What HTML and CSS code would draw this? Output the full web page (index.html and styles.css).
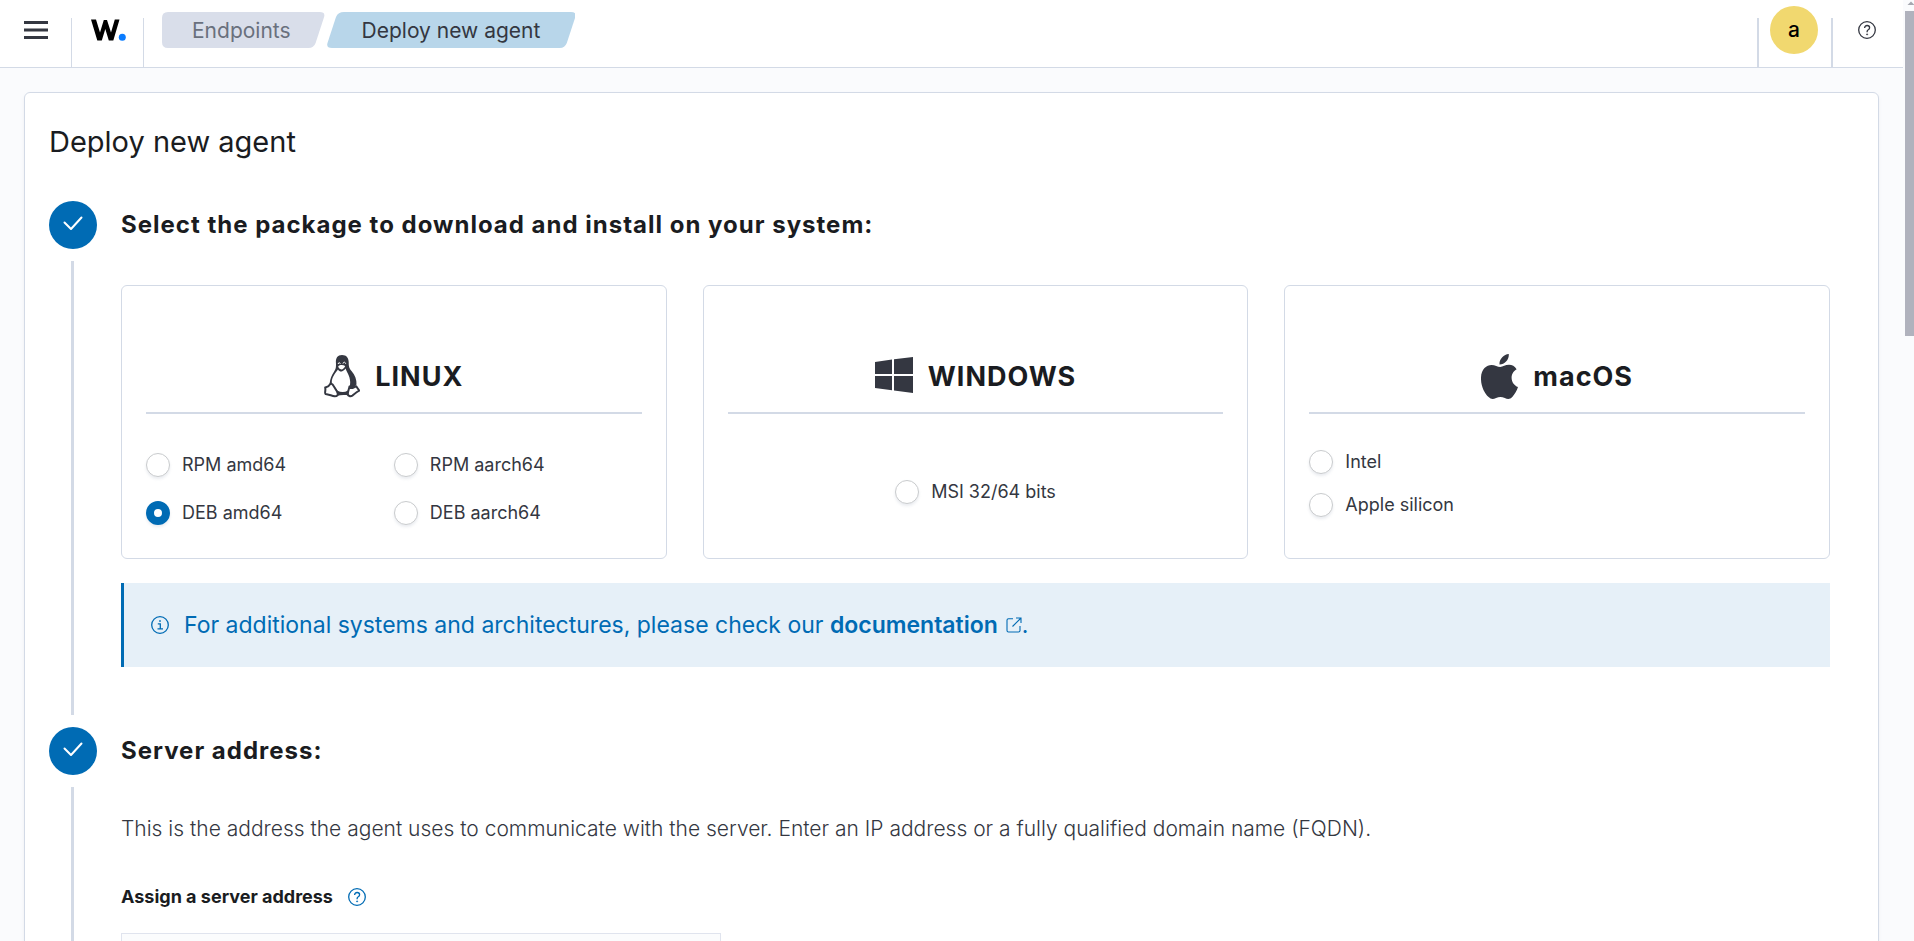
FILE: index.html
```html
<!DOCTYPE html>
<html lang="en">
<head>
<meta charset="utf-8">
<title>Deploy new agent</title>
<link rel="stylesheet" href="styles.css">
</head>
<body>
<div class="viewport">
  <div class="page">
    <header class="header">
      <button class="header-menu" type="button" aria-label="Toggle navigation">
        <svg width="24" height="18" viewBox="0 0 24 18"><path d="M0 0h24v3H0zM0 7.5h24v3H0zM0 15h24v3H0z" fill="#343741"/></svg>
      </button>
      <a class="header-logo" href="#" aria-label="Home">
        <svg width="36" height="22" viewBox="0 0 36 22"><path d="M0 .5H5L9 13.500L12.800 1H16L20 13.500L23.800 .5H28.500L22.300 21.500H17.800L14.300 10L10.800 21.500H6.300Z" fill="#000"/><circle cx="31.300" cy="18.300" r="3.500" fill="#0a7cff"/></svg>
      </a>
      <nav class="crumbs" aria-label="Breadcrumbs">
        <a class="crumb crumb-first" href="#">
          <svg class="crumb-shape" viewBox="0 0 164 36" preserveAspectRatio="none"><path d="M6 0H158Q164 0 162.500 5L154 31Q152 36 147 36H6Q0 36 0 30V6Q0 0 6 0Z" fill="#d9deea"/></svg>
          <span class="crumb-text">Endpoints</span>
        </a>
        <span class="crumb crumb-last" aria-current="page">
          <svg class="crumb-shape" viewBox="0 0 249 36" preserveAspectRatio="none"><path d="M17 0H244Q250 0 248.500 5L240 31Q238 36 233 36H5Q-1 36 .5 31L9 5Q11 0 17 0Z" fill="#b8d6ea"/></svg>
          <span class="crumb-text">Deploy new agent</span>
        </span>
      </nav>
      <div class="header-user"><button class="avatar" type="button" aria-label="Account menu">a</button></div>
      <button class="header-help" type="button" aria-label="Help">
        <svg width="18" height="18" viewBox="0 0 18 18" fill="none" stroke="#343741" stroke-width="1.300"><circle cx="9" cy="9" r="8.300"/><path d="M6.600 7.100C6.600 5.400 7.600 4.500 9.100 4.500s2.500.9 2.500 2.200c0 1-.5 1.600-1.300 2.100S9.100 9.700 9.100 10.700v.5"/><circle cx="9.100" cy="13.400" r=".6" fill="#343741" stroke-width=".6"/></svg>
      </button>
    </header>

    <main class="panel">
      <h1 class="title">Deploy new agent</h1>

      <section class="step">
        <div class="step-side">
          <span class="step-circle"><svg width="24" height="24" viewBox="0 0 24 24"><path d="M3.500 9.500l6.500 6.500L20.500 4.500" fill="none" stroke="#fff" stroke-width="2" stroke-linecap="round" stroke-linejoin="round"/></svg></span>
          <span class="step-line"></span>
        </div>
        <div class="step-body">
          <h2 class="step-title">Select the package to download and install on your system:</h2>
          <div class="cards">
            <fieldset class="card">
              <div class="card-head">
                <svg width="36" height="44" viewBox="0 0 36 44">
                  <path d="M18 1C13.500 1 11.700 4.200 11.900 8.300c.2 4.300.3 6.300-1.900 9.400C7.500 21.400 6.200 25 5.600 29.500L14 40h10l8.500-9.500c.3-4.500-1.500-9.500-4.800-13.200C24.600 13.600 24.800 11.500 24.700 8 24.600 3.800 22.500 1 18 1Z" fill="#343741"/>
                  <path d="M14 15.500c1 1.600 2.300 2.200 3.600 2 1.700-.3 3-1.700 4-3 .8 3.200 4.400 7 4.600 13.500.1 4-1.200 6-2.200 8.500-3.500 2-7 2-10.500.2-2-3.500-5.600-5.200-5.700-8.200C7.600 24 11 19 14 15.500Z" fill="#fff"/>
                  <path d="M14.200 12.300c1.400-1.500 4.400-1.900 7-.4-.5 1.600-2.200 3.500-3.900 3.500-1.500 0-2.800-1.300-3.100-3.100Z" fill="#fff"/>
                  <path d="M14.200 10c.2-1.800 1.600-1.900 2.100-.2M19 9.600c.3-1.900 2.200-1.900 2.700.2" fill="none" stroke="#fff" stroke-width="1"/>
                  <path d="M1.200 33.500c1.700-.4 3.400-.3 4.500-2.800 1.100-1.800 2.800-.8 3.600.8l4.500 7.200c.7 2.200-.6 3.700-3.100 3.600-3-.6-5.900-1.800-9.100-2.300-1.300-.7.300-3-.4-6.500Z" fill="#fff" stroke="#343741" stroke-width="2" stroke-linejoin="round"/>
                  <path d="M25.500 32.500c.4 1.300 1.500 1.800 3.100 1.500 1.700-.3 2.200-1.400 3.600-1.800.9 2.200 2.800 3.200 3 4.500-2.500 1.200-4.800 3.300-6.800 5-2 1.100-4.500.3-4.700-1.900.4-2.500 1.200-4.500 1.800-7.300Z" fill="#fff" stroke="#343741" stroke-width="2" stroke-linejoin="round"/>
                  <path d="M12.500 38c3.800 1.300 7.700 1.200 12-.3v3.800c-3.500-.7-7.500-.6-11.500.2Z" fill="#343741"/>
                </svg>
                <h3 class="card-name">LINUX</h3>
              </div>
              <div class="radios radios-two">
                <label class="radio"><input type="radio" name="package">RPM amd64</label>
                <label class="radio"><input type="radio" name="package">RPM aarch64</label>
                <label class="radio"><input type="radio" name="package" checked>DEB amd64</label>
                <label class="radio"><input type="radio" name="package">DEB aarch64</label>
              </div>
            </fieldset>
            <fieldset class="card">
              <div class="card-head">
                <svg width="38" height="38" viewBox="0 0 38 38"><path d="M0 5L17 2.600V17H0ZM19 2.300L38 0V17H19ZM0 19H17V33.300L0 31ZM19 19H38V36L19 33.600Z" fill="#343741"/></svg>
                <h3 class="card-name">WINDOWS</h3>
              </div>
              <div class="radios radios-center">
                <label class="radio"><input type="radio" name="package">MSI 32/64 bits</label>
              </div>
            </fieldset>
            <fieldset class="card">
              <div class="card-head">
                <svg width="37" height="45" viewBox="0 0 37 45"><path d="M35.600 15.200c-4 2.500-5 5.700-5 8.600 0 4.400 2.600 7.800 6.400 9.300-1.200 3.700-3.200 7.100-5.500 9.700-2.500 2.700-4.900 2.500-7.700 1.200-3.200-1.400-5.800-1.300-8.700 0-3.200 1.400-5.200 1.200-7.500-1C3.600 39.200-.3 32.300 0 23.500.3 15 5.700 11 10.500 11c3.500 0 6.100 2 8.700 2s5.100-2.200 8.900-2.200c2.900 0 5.700 1.400 7.500 4.400ZM27.800 0c.4 5.600-4.100 10.500-9.300 10.400C18.200 5.200 22.700.4 27.800 0Z" fill="#343741"/></svg>
                <h3 class="card-name">macOS</h3>
              </div>
              <div class="radios radios-stack">
                <label class="radio"><input type="radio" name="package">Intel</label>
                <label class="radio"><input type="radio" name="package">Apple silicon</label>
              </div>
            </fieldset>
          </div>
          <div class="callout">
            <svg width="18" height="18" viewBox="0 0 18 18" fill="none" stroke="#006bb4" stroke-width="1.300"><circle cx="9" cy="9" r="8.300"/><path d="M6.800 7.800H9.300V12.600M6.500 12.800h5.500"/><circle cx="9" cy="5" r=".6" fill="#006bb4" stroke-width=".7"/></svg>
            <p class="callout-text">For additional systems and architectures, please check our <a class="link" href="#">documentation<svg class="external" width="16" height="16" viewBox="0 0 16 16" fill="none" stroke="#006bb4" stroke-width="1.100"><path d="M7 1.800H2.500Q1 1.800 1 3.300V13.500Q1 15 2.500 15H12.500Q14 15 14 13.500V9M6.500 9.500L15 1M10 1H15V6"/></svg></a>.</p>
          </div>
        </div>
      </section>

      <section class="step">
        <div class="step-side">
          <span class="step-circle"><svg width="24" height="24" viewBox="0 0 24 24"><path d="M3.500 9.500l6.500 6.500L20.500 4.500" fill="none" stroke="#fff" stroke-width="2" stroke-linecap="round" stroke-linejoin="round"/></svg></span>
          <span class="step-line"></span>
        </div>
        <div class="step-body">
          <h2 class="step-title">Server address:</h2>
          <p class="step-text">This is the address the agent uses to communicate with the server. Enter an IP address or a fully qualified domain name (FQDN).</p>
          <div class="field-head">
            <label class="field-label" for="server-address">Assign a server address</label>
            <button class="field-help" type="button" aria-label="About the server address">
              <svg width="18" height="18" viewBox="0 0 18 18" fill="none" stroke="#006bb4" stroke-width="1.300"><circle cx="9" cy="9" r="8.300"/><path d="M6.600 7.100C6.600 5.400 7.600 4.500 9.100 4.500s2.500.9 2.500 2.200c0 1-.5 1.600-1.300 2.100S9.100 9.700 9.100 10.700v.5"/><circle cx="9.100" cy="13.400" r=".6" fill="#006bb4" stroke-width=".6"/></svg>
            </button>
          </div>
          <input class="field-input" id="server-address" type="text">
        </div>
      </section>
    </main>
  </div>
  <div class="scrollbar" aria-hidden="true">
    <svg width="9" height="11" viewBox="0 0 9 11"><path d="M2.500 5L6 1.500L9.500 5Z" fill="#a6a8b0"/></svg>
    <div class="scrollbar-thumb"></div>
  </div>
</div>
</body>
</html>
```
FILE: styles.css
```css
* { box-sizing: border-box; }

body {
  margin: 0;
  background: #fafbfd;
  color: #343741;
  font-family: Inter, "Liberation Sans", sans-serif;
  font-size: 18px;
  line-height: 24px;
}

h1, h2, h3, p, fieldset { margin: 0; padding: 0; }
svg { display: block; flex: none; }
button { border: 0; padding: 0; background: none; font: inherit; color: inherit; }
a { color: inherit; text-decoration: none; }

.viewport { display: flex; height: 100vh; overflow: hidden; }
.page { flex: 1; min-width: 0; }

.scrollbar { width: 11px; padding-left: 2px; flex: none; }
.scrollbar-thumb { height: 325px; background: #b0b2bd; }

/* Header */
.header {
  display: flex;
  align-items: flex-start;
  height: 68px;
  background: #fff;
  border-bottom: 1px solid #d3dae6;
}
.header-menu { padding: 21px 23px 0 24px; }
.header-logo {
  margin-top: 18px;
  height: 49px;
  padding: 1px 16px 0 19px;
  border: solid #d3dae6;
  border-width: 0 1px;
}
.crumbs { display: flex; gap: 1px; flex: 1; margin: 12px 0 0 18px; }
.crumb { position: relative; height: 36px; font-size: 21px; line-height: 38px; }
.crumb-shape { position: absolute; inset: 0; width: 100%; height: 100%; }
.crumb-text { position: relative; }
.crumb-first { padding: 0 35px 0 30px; color: #69707d; }
.crumb-last { padding: 0 35px; }
.header-user {
  display: flex;
  margin-top: 18px;
  height: 49px;
  padding: 0 13px 0 11px;
  border: solid #d3dae6;
  border-width: 0 2px;
}
.avatar {
  width: 48px;
  height: 48px;
  margin-top: -12px;
  border-radius: 50%;
  background: #f1d86f;
  color: #000;
  font-size: 21px;
  font-weight: 500;
}
.header-help { padding: 21px 27px 0 25px; }

/* Panel */
.panel {
  margin: 24px;
  padding: 30px 48px 0 24px;
  background: #fff;
  border: 1px solid #d3dae6;
  border-radius: 6px;
  box-shadow: 0 2px 3px rgba(152, 162, 179, 0.15);
}
.title { font-size: 29px; line-height: 38px; font-weight: 400; color: #1a1c21; margin-bottom: 40px; }

/* Steps */
.step { display: flex; gap: 24px; margin-bottom: 12px; }
.step-side { display: flex; flex-direction: column; gap: 12px; width: 48px; flex: none; }
.step-circle {
  display: flex;
  align-items: center;
  justify-content: center;
  width: 48px;
  height: 48px;
  border-radius: 50%;
  background: #006bb4;
}
.step-line { flex: 1; width: 3px; margin-left: 22px; background: #d3dae6; }
.step-body { flex: 1; min-width: 0; padding-bottom: 48px; }
.step-title { font-size: 24px; line-height: 48px; font-weight: 700; letter-spacing: 1px; color: #1a1c21; }

/* Package cards */
.cards { display: grid; grid-template-columns: repeat(3, 1fr); gap: 36px; margin-top: 36px; }
.card {
  min-width: 0;
  min-height: 274px;
  padding: 54px 24px 24px;
  border: 1px solid #d3dae6;
  border-radius: 6px;
}
.card-head {
  display: flex;
  align-items: center;
  justify-content: center;
  gap: 15px;
  height: 74px;
  border-bottom: 2px solid #d3dae6;
}
.card-name { padding-top: 2px; font-size: 27px; line-height: 36px; font-weight: 700; letter-spacing: 1px; color: #1a1c21; }
.radios { display: grid; }
.radios-two { grid-template-columns: 1fr 1fr; row-gap: 24px; padding-top: 39px; }
.radios-center { justify-content: center; padding-top: 66px; }
.radios-stack { row-gap: 19px; padding-top: 36px; }
.radio { display: flex; align-items: center; gap: 12px; }
.radio input {
  appearance: none;
  width: 24px;
  height: 24px;
  margin: 0;
  border: 1px solid #c9cbcd;
  border-radius: 50%;
  background: #fff;
  box-shadow: 0 2px 3px rgba(152, 162, 179, 0.2);
}
.radio input:checked { border: 8px solid #006bb4; }

/* Callout */
.callout {
  display: flex;
  align-items: center;
  gap: 15px;
  margin-top: 24px;
  padding: 24px 27px;
  border-left: 3px solid #006bb4;
  background: #e6f0f8;
  color: #006bb4;
}
.callout-text { font-size: 23px; line-height: 36px; }
.link { font-weight: 600; }
.external { display: inline-block; margin-left: 8px; }

/* Server address */
.step-text { margin-top: 36px; font-size: 21px; line-height: 36px; font-weight: 350; }
.field-head { display: flex; align-items: center; gap: 15px; margin-top: 38px; }
.field-label { font-weight: 700; color: #1a1c21; }
.field-input {
  display: block;
  width: 600px;
  max-width: 100%;
  height: 60px;
  margin-top: 24px;
  padding: 0 18px;
  border: 1px solid #e0e4ee;
  background: #fbfcfd;
  font: inherit;
}
```
